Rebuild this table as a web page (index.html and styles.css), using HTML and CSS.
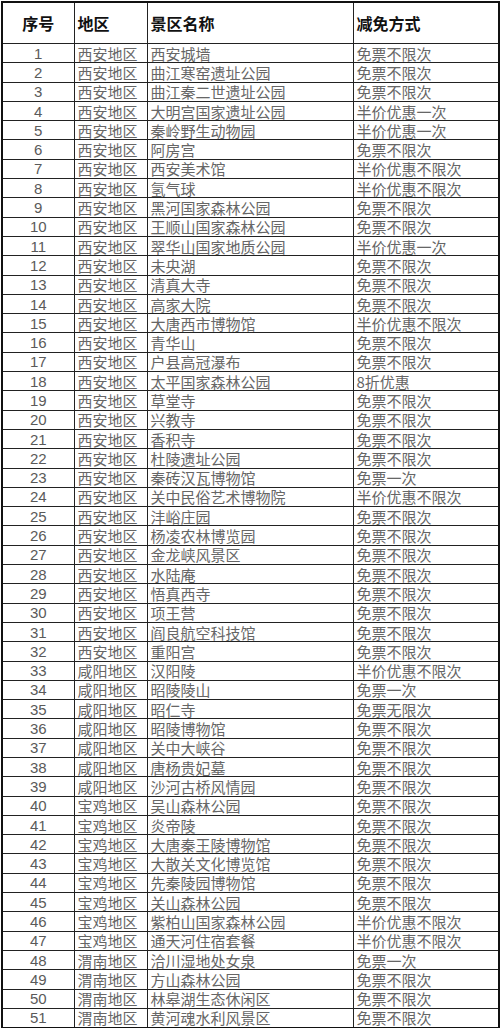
FILE: index.html
```html
<!DOCTYPE html>
<html lang="zh-CN">
<head>
<meta charset="utf-8">
<title>景区减免方式</title>
<link rel="stylesheet" href="styles.css">
</head>
<body>
<table class="sheet">
<colgroup><col class="c-no"><col class="c-area"><col class="c-name"><col class="c-way"></colgroup>
<thead>
<tr class="head"><th class="no">序号</th><th>地区</th><th>景区名称</th><th>减免方式</th></tr>
</thead>
<tbody>
<tr><td class="no">1</td><td>西安地区</td><td>西安城墙</td><td>免票不限次</td></tr>
<tr><td class="no">2</td><td>西安地区</td><td>曲江寒窑遗址公园</td><td>免票不限次</td></tr>
<tr><td class="no">3</td><td>西安地区</td><td>曲江秦二世遗址公园</td><td>免票不限次</td></tr>
<tr><td class="no">4</td><td>西安地区</td><td>大明宫国家遗址公园</td><td>半价优惠一次</td></tr>
<tr><td class="no">5</td><td>西安地区</td><td>秦岭野生动物园</td><td>半价优惠一次</td></tr>
<tr><td class="no">6</td><td>西安地区</td><td>阿房宫</td><td>免票不限次</td></tr>
<tr><td class="no">7</td><td>西安地区</td><td>西安美术馆</td><td>半价优惠不限次</td></tr>
<tr><td class="no">8</td><td>西安地区</td><td>氢气球</td><td>半价优惠不限次</td></tr>
<tr><td class="no">9</td><td>西安地区</td><td>黑河国家森林公园</td><td>免票不限次</td></tr>
<tr><td class="no">10</td><td>西安地区</td><td>王顺山国家森林公园</td><td>免票不限次</td></tr>
<tr><td class="no">11</td><td>西安地区</td><td>翠华山国家地质公园</td><td>半价优惠一次</td></tr>
<tr><td class="no">12</td><td>西安地区</td><td>未央湖</td><td>免票不限次</td></tr>
<tr><td class="no">13</td><td>西安地区</td><td>清真大寺</td><td>免票不限次</td></tr>
<tr><td class="no">14</td><td>西安地区</td><td>高家大院</td><td>免票不限次</td></tr>
<tr><td class="no">15</td><td>西安地区</td><td>大唐西市博物馆</td><td>半价优惠不限次</td></tr>
<tr><td class="no">16</td><td>西安地区</td><td>青华山</td><td>免票不限次</td></tr>
<tr><td class="no">17</td><td>西安地区</td><td>户县高冠瀑布</td><td>免票不限次</td></tr>
<tr><td class="no">18</td><td>西安地区</td><td>太平国家森林公园</td><td>8折优惠</td></tr>
<tr><td class="no">19</td><td>西安地区</td><td>草堂寺</td><td>免票不限次</td></tr>
<tr><td class="no">20</td><td>西安地区</td><td>兴教寺</td><td>免票不限次</td></tr>
<tr><td class="no">21</td><td>西安地区</td><td>香积寺</td><td>免票不限次</td></tr>
<tr><td class="no">22</td><td>西安地区</td><td>杜陵遗址公园</td><td>免票不限次</td></tr>
<tr><td class="no">23</td><td>西安地区</td><td>秦砖汉瓦博物馆</td><td>免票一次</td></tr>
<tr><td class="no">24</td><td>西安地区</td><td>关中民俗艺术博物院</td><td>半价优惠不限次</td></tr>
<tr><td class="no">25</td><td>西安地区</td><td>沣峪庄园</td><td>免票不限次</td></tr>
<tr><td class="no">26</td><td>西安地区</td><td>杨凌农林博览园</td><td>免票不限次</td></tr>
<tr><td class="no">27</td><td>西安地区</td><td>金龙峡风景区</td><td>免票不限次</td></tr>
<tr><td class="no">28</td><td>西安地区</td><td>水陆庵</td><td>免票不限次</td></tr>
<tr><td class="no">29</td><td>西安地区</td><td>悟真西寺</td><td>免票不限次</td></tr>
<tr><td class="no">30</td><td>西安地区</td><td>项王营</td><td>免票不限次</td></tr>
<tr><td class="no">31</td><td>西安地区</td><td>阎良航空科技馆</td><td>免票不限次</td></tr>
<tr><td class="no">32</td><td>西安地区</td><td>重阳宫</td><td>免票不限次</td></tr>
<tr><td class="no">33</td><td>咸阳地区</td><td>汉阳陵</td><td>半价优惠不限次</td></tr>
<tr><td class="no">34</td><td>咸阳地区</td><td>昭陵陵山</td><td>免票一次</td></tr>
<tr><td class="no">35</td><td>咸阳地区</td><td>昭仁寺</td><td>免票无限次</td></tr>
<tr><td class="no">36</td><td>咸阳地区</td><td>昭陵博物馆</td><td>免票不限次</td></tr>
<tr><td class="no">37</td><td>咸阳地区</td><td>关中大峡谷</td><td>免票不限次</td></tr>
<tr><td class="no">38</td><td>咸阳地区</td><td>唐杨贵妃墓</td><td>免票不限次</td></tr>
<tr><td class="no">39</td><td>咸阳地区</td><td>沙河古桥风情园</td><td>免票不限次</td></tr>
<tr><td class="no">40</td><td>宝鸡地区</td><td>吴山森林公园</td><td>免票不限次</td></tr>
<tr><td class="no">41</td><td>宝鸡地区</td><td>炎帝陵</td><td>免票不限次</td></tr>
<tr><td class="no">42</td><td>宝鸡地区</td><td>大唐秦王陵博物馆</td><td>免票不限次</td></tr>
<tr><td class="no">43</td><td>宝鸡地区</td><td>大散关文化博览馆</td><td>免票不限次</td></tr>
<tr><td class="no">44</td><td>宝鸡地区</td><td>先秦陵园博物馆</td><td>免票不限次</td></tr>
<tr><td class="no">45</td><td>宝鸡地区</td><td>关山森林公园</td><td>免票不限次</td></tr>
<tr><td class="no">46</td><td>宝鸡地区</td><td>紫柏山国家森林公园</td><td>半价优惠不限次</td></tr>
<tr><td class="no">47</td><td>宝鸡地区</td><td>通天河住宿套餐</td><td>半价优惠不限次</td></tr>
<tr><td class="no">48</td><td>渭南地区</td><td>洽川湿地处女泉</td><td>免票一次</td></tr>
<tr><td class="no">49</td><td>渭南地区</td><td>方山森林公园</td><td>免票不限次</td></tr>
<tr><td class="no">50</td><td>渭南地区</td><td>林皋湖生态休闲区</td><td>免票不限次</td></tr>
<tr><td class="no">51</td><td>渭南地区</td><td>黄河魂水利风景区</td><td>免票不限次</td></tr>
</tbody>
</table>
</body>
</html>
```

FILE: styles.css
```css
html, body {
  margin: 0;
  padding: 0;
  background: #fff;
}
body {
  padding: 1px 0 0 1px;
  font-family: "Liberation Serif", "Noto Sans CJK SC", serif;
}
.sheet {
  border-collapse: collapse;
  table-layout: fixed;
  width: 497px;
  border: 2px solid #111;
}
.c-no { width: 72px; }
.c-area { width: 73px; }
.c-name { width: 206px; }
.c-way { width: 146px; }

.sheet th,
.sheet td {
  border: 1px solid #222;
  padding: 0 0 0 3px;
  text-align: left;
  white-space: nowrap;
  overflow: hidden;
  vertical-align: middle;
}
.head th {
  height: 40px;
  font-family: "Noto Sans CJK SC", sans-serif;
  font-weight: 700;
  font-size: 16px;
  color: #111;
  line-height: 18px;
}
.sheet td {
  height: 18.3px;
  font-family: "Noto Sans CJK SC", sans-serif;
  font-size: 15px;
  line-height: 17px;
  color: #666;
  font-weight: 400;
}
.sheet th.no {
  text-align: center;
  padding: 0;
}
.sheet td.no {
  text-align: center;
  padding: 0;
  font-family: "Liberation Sans", "Noto Sans", sans-serif;
  font-size: 15px;
  color: #5a5a5a;
}
```
